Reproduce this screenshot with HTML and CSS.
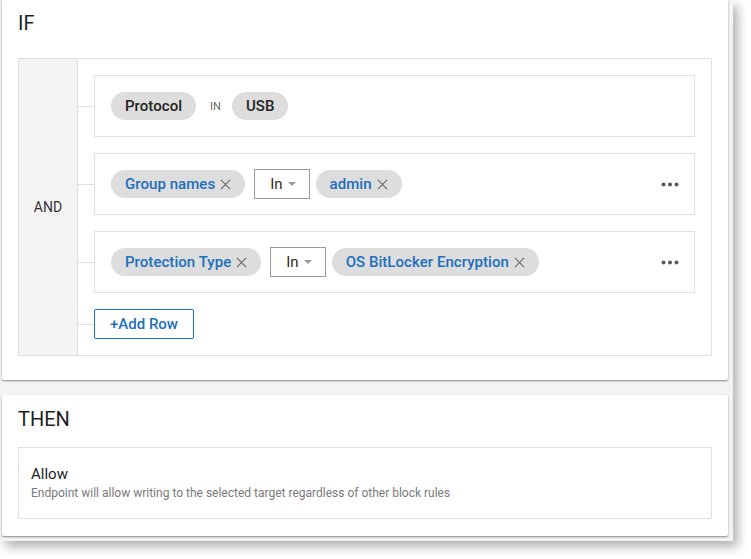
FILE: index.html
```html
<!DOCTYPE html>
<html lang="en">
<head>
    <meta charset="UTF-8">
    <title>Rule Editor</title>
    <link rel="stylesheet" href="styles.css">
</head>
<body>
<div class="frame">

    <div class="card card-if">
        <h2 class="title">IF</h2>

        <div class="group">
            <div class="op">AND</div>
            <div class="rows">

                <div class="line">
                    <div class="wire"></div>
                    <div class="rule">
                        <span class="chip">Protocol</span>
                        <span class="in-label">IN</span>
                        <span class="chip">USB</span>
                    </div>
                </div>

                <div class="line">
                    <div class="wire"></div>
                    <div class="rule">
                        <span class="chip blue">Group names <svg class="x" viewBox="0 0 12 12"><path d="M1 1L11 11M11 1L1 11"/></svg></span>
                        <span class="select">In <i class="caret"></i></span>
                        <span class="chip blue">admin <svg class="x" viewBox="0 0 12 12"><path d="M1 1L11 11M11 1L1 11"/></svg></span>
                        <svg class="dots" viewBox="0 0 18 5"><circle cx="2.5" cy="2.5" r="2"/><circle cx="9" cy="2.5" r="2"/><circle cx="15.5" cy="2.5" r="2"/></svg>
                    </div>
                </div>

                <div class="line">
                    <div class="wire"></div>
                    <div class="rule">
                        <span class="chip blue">Protection Type <svg class="x" viewBox="0 0 12 12"><path d="M1 1L11 11M11 1L1 11"/></svg></span>
                        <span class="select">In <i class="caret"></i></span>
                        <span class="chip blue">OS BitLocker Encryption <svg class="x" viewBox="0 0 12 12"><path d="M1 1L11 11M11 1L1 11"/></svg></span>
                        <svg class="dots" viewBox="0 0 18 5"><circle cx="2.5" cy="2.5" r="2"/><circle cx="9" cy="2.5" r="2"/><circle cx="15.5" cy="2.5" r="2"/></svg>
                    </div>
                </div>

                <div class="line">
                    <div class="wire"></div>
                    <button class="add-row">+Add Row</button>
                </div>

            </div>
        </div>
    </div>

    <div class="card card-then">
        <h2 class="title">THEN</h2>
        <div class="action">
            <div class="action-name">Allow</div>
            <div class="action-desc">Endpoint will allow writing to the selected target regardless of other block rules</div>
        </div>
    </div>

</div>
</body>
</html>
```

FILE: styles.css
```css
body {
    margin: 0;
    padding-bottom: 18px;
    background-color: white;
    font-family: Roboto, "Liberation Sans", sans-serif;
    color: #222;
}

.frame {
    width: 726px;
    height: 541px;
    padding: 0 5px 0 2px;
    background-color: #f3f3f3;
    box-shadow: 5px 6px 10px rgba(0, 0, 0, 0.3);
    overflow: hidden;
}

.card {
    background-color: white;
    border-radius: 2px;
    box-shadow: 0 1px 2px rgba(0, 0, 0, 0.45);
    padding: 12px 16px 0 16px;
}

.card-if {
    margin-top: -1px;
    height: 369px;
}

.card-then {
    margin-top: 15px;
    height: 129px;
}

.title {
    margin: 0;
    font-size: 20px;
    font-weight: 400;
    line-height: 24px;
    color: #1e1e1e;
}

.group {
    display: flex;
    margin-top: 23px;
    border: 1px solid #e0e0e0;
}

.op {
    width: 58px;
    background-color: #f4f4f4;
    border-right: 1px solid #e0e0e0;
    display: flex;
    align-items: center;
    justify-content: center;
    font-size: 14px;
    color: #333;
}

.rows {
    flex: 1;
    display: flex;
    flex-direction: column;
    gap: 16px;
    padding: 16px 16px 16px 0;
}

.line {
    display: flex;
    align-items: center;
}

.wire {
    width: 16px;
    height: 1px;
    background-color: #e0e0e0;
}

.rule {
    flex: 1;
    height: 60px;
    border: 1px solid #e0e0e0;
    display: flex;
    align-items: center;
    padding: 0 15px 0 16px;
}

.chip {
    display: inline-flex;
    align-items: center;
    height: 28px;
    padding: 0 14px;
    border-radius: 14px;
    background-color: #dddddd;
    font-size: 15px;
    font-weight: 500;
    letter-spacing: 0.05px;
    color: #222;
}

.chip.blue {
    color: #1c6fbd;
    padding-right: 14px;
}

.x {
    width: 11px;
    height: 11px;
    margin-left: 5px;
    stroke: #666;
    stroke-width: 1.2;
    fill: none;
}

.in-label {
    font-size: 11px;
    color: #666;
    margin: 0 11px 0 14px;
}

.select {
    display: inline-flex;
    align-items: center;
    height: 28px;
    padding: 0 13px 0 15px;
    margin: 0 6px 0 9px;
    border: 1px solid #9a9a9a;
    font-size: 15px;
    color: #3a1f1f;
}

.caret {
    width: 0;
    height: 0;
    margin-left: 5px;
    border-left: 4px solid transparent;
    border-right: 4px solid transparent;
    border-top: 4px solid #999;
}

.dots {
    margin-left: auto;
    width: 18px;
    height: 5px;
    fill: #5a5a5a;
}

.add-row {
    height: 30px;
    width: 100px;
    background-color: white;
    border: 1px solid #1c6fbd;
    border-radius: 2px;
    color: #1c6fbd;
    font-family: Roboto, "Liberation Sans", sans-serif;
    font-size: 15px;
    font-weight: 500;
    padding: 0;
}

.action {
    margin-top: 16px;
    height: 72px;
    border: 1px solid #e0e0e0;
    padding: 17px 12px 0 12px;
    box-sizing: border-box;
}

.action-name {
    font-size: 15px;
    line-height: 18px;
    color: #222;
}

.action-desc {
    font-size: 12px;
    line-height: 16px;
    margin-top: 2px;
    color: #7a7a7a;
}
```
